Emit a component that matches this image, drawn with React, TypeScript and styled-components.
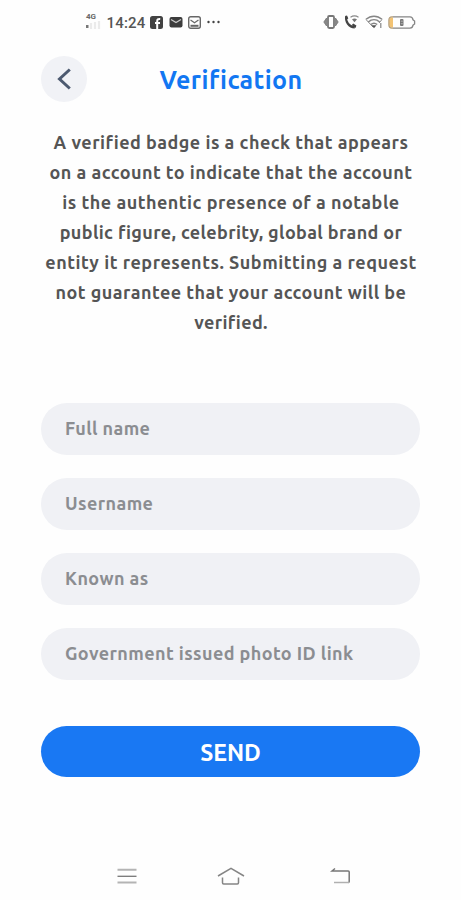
import React from "react";
import styled, { createGlobalStyle } from "styled-components";

const GlobalStyle = createGlobalStyle`
  * { box-sizing: border-box; }
  body { margin: 0; background: #fefefe; font-family: Ubuntu, "Noto Sans", sans-serif; }
`;

const Screen = styled.main`
  width: 461px;
  height: 900px;
  display: flex;
  flex-direction: column;
  background: #fefefe;
  overflow: hidden;
`;

const StatusBar = styled.div`
  height: 44px;
  padding: 0 45px 0 84px;
  display: flex;
  justify-content: space-between;
  align-items: center;
`;

const StatusGroup = styled.div<{ $gap: number }>`
  display: flex;
  align-items: center;
  gap: ${(p) => p.$gap}px;
`;

const Signal = styled.div`
  width: 18px;
  height: 18px;
  display: flex;
  flex-direction: column;
  font: 700 8px/7px Roboto, sans-serif;
  color: #666;
  padding-left: 2px;
`;

const Clock = styled.time`
  font: 500 15px/18px Roboto, sans-serif;
  color: #555;
  letter-spacing: 0.2px;
  margin: 2px -1px 0 -1px;
`;

const Header = styled.header`
  height: 70px;
  padding: 0 41px;
  display: grid;
  grid-template-columns: 46px 1fr 46px;
  align-items: center;
`;

const BackButton = styled.button`
  width: 46px;
  height: 46px;
  padding: 0;
  border: 0;
  border-radius: 50%;
  background: #f1f2f6;
  display: grid;
  place-items: center;
`;

const Title = styled.h1`
  margin: 1px 0 0 1px;
  text-align: center;
  font-size: 25px;
  line-height: 34px;
  font-weight: 700;
  color: #1277f2;
  white-space: nowrap;
  letter-spacing: 0.4px;
`;

const Description = styled.p`
  margin: 13px 0 0;
  padding-left: 1px;
  text-align: center;
  font-size: 18px;
  line-height: 30px;
  font-weight: 700;
  color: #555;
`;

const Line = styled.span<{ $spacing: number }>`
  display: block;
  white-space: nowrap;
  letter-spacing: ${(p) => p.$spacing}px;
`;

const Form = styled.form`
  margin: 66px 41px 0;
  display: flex;
  flex-direction: column;
  gap: 23px;
`;

const Field = styled.label`
  height: 52px;
  border-radius: 26px;
  background: #f0f1f5;
  padding: 0 24px 2px;
  display: flex;
  align-items: center;
  font-size: 18px;
  font-weight: 700;
  color: #8b8d91;
  white-space: nowrap;
  letter-spacing: 0.41px;
`;

const SendButton = styled.button`
  height: 51px;
  margin-top: 23px;
  border: 0;
  border-radius: 26px;
  background: #1978f3;
  color: #fff;
  font: 700 23px/30px Ubuntu, "Noto Sans", sans-serif;
  padding: 3px 0 0;
`;

const NavBar = styled.nav`
  margin-top: auto;
  height: 48px;
  padding: 0 109px 0 116px;
  display: grid;
  grid-template-columns: 100px 100px 1fr;
  justify-items: start;
  align-items: center;

  svg:last-child { justify-self: end; }
`;

const lines = [
  { text: "A verified badge is a check that appears", spacing: 0.47 },
  { text: "on a account to indicate that the account", spacing: 0.46 },
  { text: "is the authentic presence of a notable", spacing: 0.49 },
  { text: "public figure, celebrity, global brand or", spacing: 0.36 },
  { text: "entity it represents. Submitting a request", spacing: 0.5 },
  { text: "not guarantee that your account will be", spacing: 0.46 },
  { text: "verified.", spacing: 0.35 },
];

const fields = ["Full name", "Username", "Known as", "Government issued photo ID link"];

const SignalBars = () => (
  <svg width="16" height="10" viewBox="0 0 16 10">
    <rect x="0" y="5" width="2.5" height="3" fill="#777" />
    <path d="M5 3v6M9 2v7M13 1v8" stroke="#ebebeb" strokeWidth="2.2" />
  </svg>
);

const FacebookIcon = () => (
  <svg width="13" height="13" viewBox="0 0 13 13">
    <rect width="13" height="13" rx="2.5" fill="#424242" />
    <path d="M7.2 13V5.2c0-1.7.8-2.4 3-2.2M5 7h5" fill="none" stroke="#fff" strokeWidth="2" />
  </svg>
);

const MailIcon = () => (
  <svg width="14" height="12" viewBox="0 0 14 12">
    <rect x=".5" y="1" width="13" height="10.5" rx="2" fill="#3c3c3c" />
    <path d="m2 3.5 5 3 5-3" fill="none" stroke="#c9c9c9" strokeWidth="1.3" />
  </svg>
);

const ImageMailIcon = () => (
  <svg width="13" height="13" viewBox="0 0 13 13" fill="none" stroke="#666">
    <rect x=".7" y=".7" width="11.6" height="11.6" rx="2" strokeWidth="1.4" />
    <path d="m2.5 4 4 2.7 4-2.7" strokeWidth="1.2" />
    <path d="M2.5 9.8h8" strokeWidth="2" />
  </svg>
);

const DotsIcon = () => (
  <svg width="14" height="4" viewBox="0 0 14 4" fill="#444">
    <circle cx="1.5" cy="2" r="1.2" />
    <circle cx="6.5" cy="2" r="1.2" />
    <circle cx="11.5" cy="2" r="1.2" />
  </svg>
);

const VibrateIcon = () => (
  <svg width="16" height="14" viewBox="0 0 16 14" fill="none" stroke="#777">
    <rect x="5" y="1" width="6" height="12" rx="1.2" strokeWidth="1.8" />
    <path d="M3.5 3v8L.8 7zM12.5 3v8l2.7-4z" fill="#888" strokeWidth=".8" />
  </svg>
);

const CallIcon = () => (
  <svg width="16" height="14" viewBox="0 0 16 14" fill="none">
    <path d="M2.2 1.5C1.2 6.6 5 12 10.8 12.4" stroke="#444" strokeWidth="2.2" />
    <path d="m1 1 2-.6 1.3 3-1.8 1.2zM7.8 10l1.4-1.4 3.2 2-.8 2.4z" fill="#444" />
    <path d="M6.5 2.2c2.5-1.6 5.5-1.6 8 0" stroke="#888" strokeWidth="1.1" />
    <path d="M8 4.3c1.7-1.2 3.3-1.2 5 0l-2.5 3z" fill="#777" />
  </svg>
);

const WifiIcon = () => (
  <svg width="18" height="14" viewBox="0 0 18 14" fill="none" stroke="#858585">
    <path d="M1 4.3c4.8-4.2 11.2-4.2 16 0M3.3 7c3.4-3 8-3 11.4 0M5.8 9.5c1.9-1.6 4.5-1.6 6.4 0" strokeWidth="1.5" />
    <path d="M1 4.5 8 12M17 4.5 14 8" strokeWidth="1" />
    <path d="M6.5 10.2h5L9 13.2z" fill="#555" stroke="none" />
    <path d="M15.8 8v5" strokeWidth="1.2" />
  </svg>
);

const BatteryIcon = () => (
  <svg width="28" height="13" viewBox="0 0 28 13">
    <path d="M4 1.5h1v10H4Q1.2 11.5 1.2 8.5v-4Q1.2 1.5 4 1.5z" fill="#f3c373" />
    <path d="M5 .9h17q2.6 0 3 3l1.6 1.1v3L25 9.1q-.4 3-3 3H5" fill="none" stroke="#858585" strokeWidth="1.3" />
    <path d="M5 .9H4Q.9.9.9 4v5q0 3.1 3.1 3.1h1" fill="none" stroke="#b29a73" strokeWidth="1.2" />
    <rect x="12" y="3" width="3.5" height="7" rx="1" fill="#777" />
    <path d="M12.8 5.2h2M12.8 7.7h2" stroke="#ccc" strokeWidth=".7" />
  </svg>
);

const BackChevron = () => (
  <svg width="46" height="46" viewBox="0 0 46 46" fill="none" stroke="#4d5a70" strokeWidth="3">
    <path d="M28.8 13.5 18.5 23 28.8 32.5" />
  </svg>
);

const MenuIcon = () => (
  <svg width="22" height="18" viewBox="0 0 22 18">
    <path d="M1.5 2.7h19M1.5 15.5h19" stroke="#b4b4b4" strokeWidth="2" />
    <path d="M1.5 9.3h19" stroke="#777" strokeWidth="1.3" />
  </svg>
);

const HomeIcon = () => (
  <svg width="30" height="20" viewBox="0 0 30 20" fill="none" stroke="#858585" strokeWidth="1.5">
    <path d="M2 10 15 2.3l13 7.7M6.5 11.5v5.3q0 1.2 1.2 1.2h13.6q1.2 0 1.2-1.2v-5.3" />
  </svg>
);

const ReturnIcon = () => (
  <svg width="22" height="18" viewBox="0 0 22 18" fill="none" strokeWidth="1.5">
    <path d="M5 1.5 2 4h16.2q1 0 1 1v9.5q0 1-1 1" stroke="#777" />
    <path d="M19 15.5H4" stroke="#b0b0b0" />
  </svg>
);

export default function App() {
  return (
    <Screen>
      <GlobalStyle />
      <StatusBar>
        <StatusGroup $gap={5.5}>
          <Signal>4G<SignalBars /></Signal>
          <Clock>14:24</Clock>
          <FacebookIcon />
          <MailIcon />
          <ImageMailIcon />
          <DotsIcon />
        </StatusGroup>
        <StatusGroup $gap={5}>
          <VibrateIcon />
          <CallIcon />
          <WifiIcon />
          <BatteryIcon />
        </StatusGroup>
      </StatusBar>
      <Header>
        <BackButton type="button" aria-label="Back"><BackChevron /></BackButton>
        <Title>Verification</Title>
      </Header>
      <Description>
        {lines.map((l) => <Line key={l.text} $spacing={l.spacing}>{l.text}</Line>)}
      </Description>
      <Form>
        {fields.map((field) => <Field key={field}>{field}</Field>)}
        <SendButton type="button">SEND</SendButton>
      </Form>
      <NavBar>
        <MenuIcon />
        <HomeIcon />
        <ReturnIcon />
      </NavBar>
    </Screen>
  );
}
